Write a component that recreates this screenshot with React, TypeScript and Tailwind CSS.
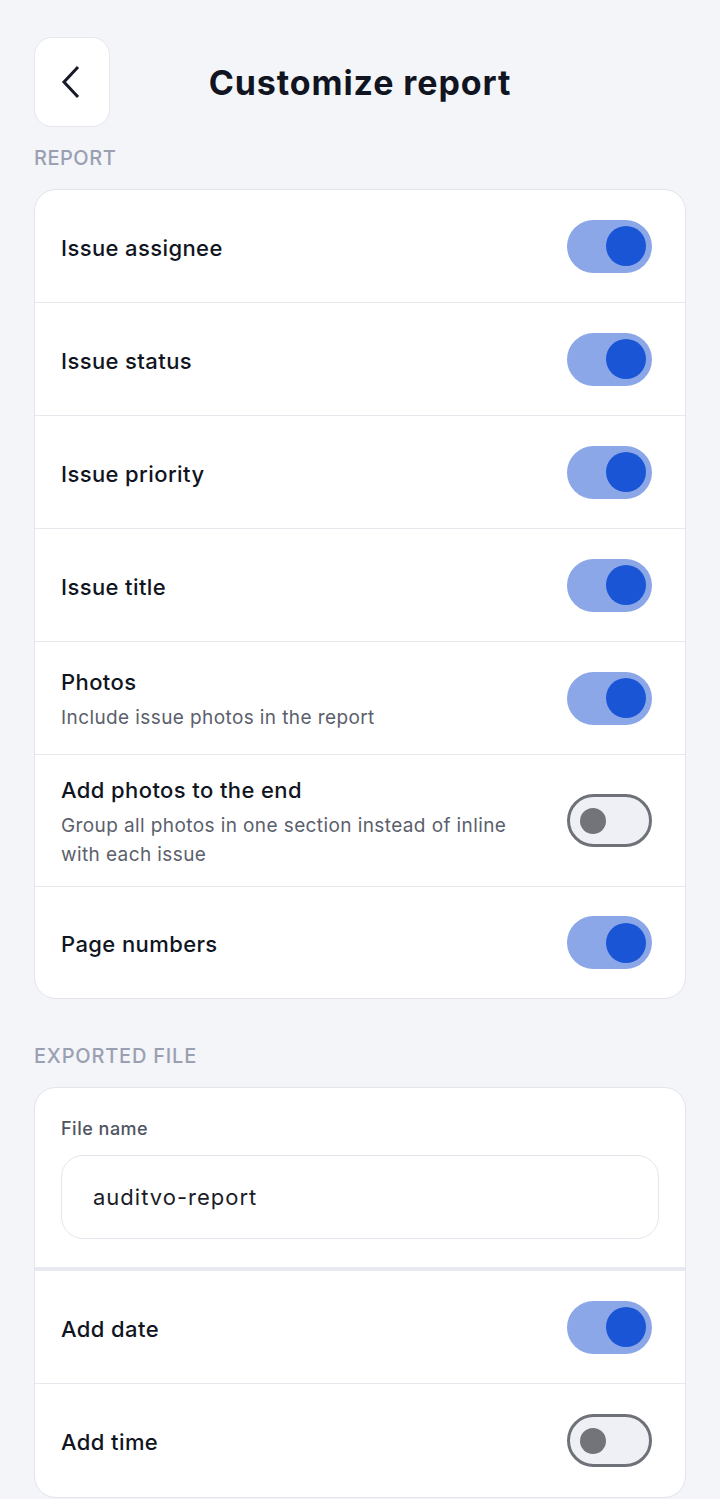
import React from "react";

function Toggle({ on }: { on: boolean }) {
  if (on) {
    return (
      <div className="flex h-[53px] w-[85px] shrink-0 items-center justify-end rounded-full bg-[#8ba7e8] pr-[6px]">
        <div className="h-[40px] w-[40px] rounded-full bg-[#1a55d6]" />
      </div>
    );
  }
  return (
    <div className="flex h-[53px] w-[85px] shrink-0 items-center rounded-full border-[3px] border-[#6f7178] bg-[#eef0f6] pl-[10px]">
      <div className="h-[26px] w-[26px] rounded-full bg-[#737479]" />
    </div>
  );
}

function Row({
  title,
  sub,
  on,
  last,
  h,
}: {
  title: string;
  sub?: string;
  on: boolean;
  last?: boolean;
  h: string;
}) {
  return (
    <div
      className={`flex items-center justify-between pl-[26px] pr-[33px] ${h} ${
        last ? "" : "border-b border-[#e6e8ee]"
      }`}
    >
      <div className="flex flex-col pr-4 pt-[3px]">
        <div className="text-[22px] font-medium leading-[28px] tracking-[0.4px] text-[#111522]">{title}</div>
        {sub && (
          <div className="mt-[7px] max-w-[470px] text-[19px] leading-[29px] tracking-[0.4px] text-[#5b606c]">
            {sub}
          </div>
        )}
      </div>
      <Toggle on={on} />
    </div>
  );
}

export default function App() {
  return (
    <div
      className="min-h-[1499px] w-[720px] bg-[#f4f5f9] px-[34px] pt-[37px]"
      style={{ fontFamily: "Inter, 'Noto Sans', sans-serif" }}
    >
      <div className="relative flex items-center">
        <div className="flex h-[90px] w-[76px] items-center justify-center rounded-[18px] border border-[#e6e8ee] bg-white">
          <svg width="26" height="34" viewBox="0 0 26 34" fill="none">
            <path d="M19 2 L5 17 L19 32" stroke="#161a26" strokeWidth="3" strokeLinecap="butt" />
          </svg>
        </div>
        <div className="pointer-events-none absolute left-0 right-0 text-center text-[34px] font-bold tracking-[0.9px] text-[#111522]">
          Customize report
        </div>
      </div>

      <div className="mt-[16px] text-[20px] font-medium tracking-[0.5px] text-[#9aa0b1]">REPORT</div>

      <div className="mt-[16px] overflow-hidden rounded-[22px] border border-[#e3e5ec] bg-white">
        <Row h="h-[113px]" title="Issue assignee" on />
        <Row h="h-[113px]" title="Issue status" on />
        <Row h="h-[113px]" title="Issue priority" on />
        <Row h="h-[113px]" title="Issue title" on />
        <Row h="h-[113px]" title="Photos" sub="Include issue photos in the report" on />
        <Row
          h="h-[132px]"
          title="Add photos to the end"
          sub="Group all photos in one section instead of inline with each issue"
          on={false}
        />
        <Row h="h-[111px]" title="Page numbers" on last />
      </div>

      <div className="mt-[42px] text-[20px] font-medium tracking-[0.8px] text-[#9aa0b1]">EXPORTED FILE</div>

      <div className="mt-[16px] overflow-hidden rounded-[22px] border border-[#e3e5ec] bg-white">
        <div className="border-b-4 border-[#e8eaf0] px-[26px] pb-[28px] pt-[30px]">
          <div className="text-[18px] font-medium leading-[22px] tracking-[0.5px] text-[#4f5461]">File name</div>
          <div className="mt-[15px] flex h-[84px] items-center rounded-[22px] border border-[#e3e5ec] pl-[31px] text-[22px] tracking-[1px] text-[#1a1d28]">
            auditvo-report
          </div>
        </div>
        <Row h="h-[113px]" title="Add date" on />
        <Row h="h-[113px]" title="Add time" on={false} last />
      </div>
    </div>
  );
}
